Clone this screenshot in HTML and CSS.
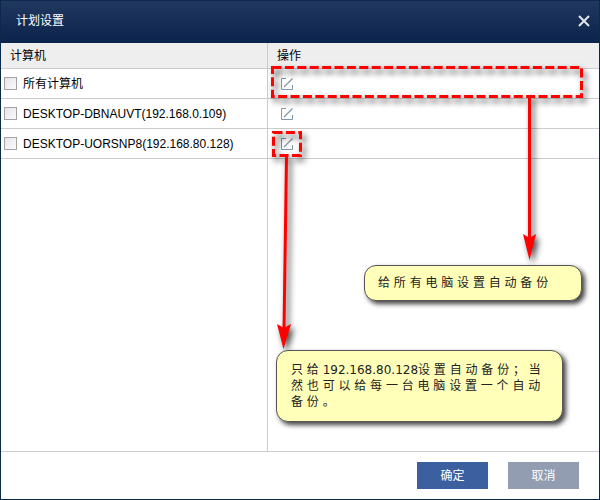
FILE: index.html
```html
<!DOCTYPE html>
<html lang="zh-CN">
<head>
<meta charset="utf-8">
<title>计划设置</title>
<link rel="stylesheet" href="styles.css">
</head>
<body>
<svg class="defs" aria-hidden="true">
  <symbol id="edit" viewBox="0 0 12 12">
    <path d="M5 .5H.5V11.5H11.5V7" fill="none" stroke="#7f97a8"/>
    <path d="M3 9L11.5 .5" fill="none" stroke="#7f97a8" stroke-width="1.2"/>
  </symbol>
</svg>
<main class="dialog">
  <header class="titlebar">
    <h1>计划设置</h1>
    <button class="close" type="button" aria-label="关闭">
      <svg viewBox="0 0 12 12" width="12" height="12"><path d="M1 1L11 11M11 1L1 11" stroke="#e2e5ea" stroke-width="2"/></svg>
    </button>
  </header>
  <div class="content">
    <table>
      <thead>
        <tr><th class="name" scope="col">计算机</th><th scope="col">操作</th></tr>
      </thead>
      <tbody>
        <tr>
          <td><label><input type="checkbox">所有计算机</label></td>
          <td><button class="edit" type="button" aria-label="编辑"><svg width="12" height="12"><use href="#edit"/></svg></button></td>
        </tr>
        <tr>
          <td><label><input type="checkbox">DESKTOP-DBNAUVT(192.168.0.109)</label></td>
          <td><button class="edit" type="button" aria-label="编辑"><svg width="12" height="12"><use href="#edit"/></svg></button></td>
        </tr>
        <tr>
          <td><label><input type="checkbox">DESKTOP-UORSNP8(192.168.80.128)</label></td>
          <td><button class="edit" type="button" aria-label="编辑"><svg width="12" height="12"><use href="#edit"/></svg></button></td>
        </tr>
        <tr class="filler"><td></td><td></td></tr>
      </tbody>
    </table>
  </div>
  <footer class="actions">
    <button class="btn primary" type="button">确定</button>
    <button class="btn secondary" type="button">取消</button>
  </footer>
  <svg class="marks" width="600" height="500" viewBox="0 0 600 500" aria-hidden="true">
    <g class="shadowed">
      <rect class="dash" x="272.5" y="67.5" width="309" height="29"/>
      <rect class="dash" x="273.5" y="132.5" width="27" height="23"/>
      <path class="line" d="M529.5 97V242M286.5 157L284 330"/>
      <path class="head" d="M529.5 260L523 234L529.5 238L536 234ZM283.5 349L277 324L284 328L291 324Z"/>
    </g>
  </svg>
  <p class="callout all">给 所 有 电 脑 设 置 自 动 备 份</p>
  <p class="callout one">只 给 192.168.80.128设 置 自 动 备 份 ； 当 然 也 可 以 给 每 一 台 电 脑 设 置 一 个 自 动 备 份 。</p>
</main>
</body>
</html>
```
FILE: styles.css
```css
* { box-sizing: border-box; }
body {
  margin: 0;
  font: 12px/16px "Liberation Sans", "Noto Sans CJK SC", sans-serif;
  color: #000;
}
button { font: inherit; border: 0; padding: 0; cursor: pointer; }
.defs { position: absolute; width: 0; height: 0; }
.dialog {
  position: relative;
  display: flex;
  flex-direction: column;
  min-height: 100vh;
  border: 1px solid #0b2948;
  background: #fff;
}
.titlebar {
  display: flex;
  align-items: center;
  justify-content: space-between;
  height: 42px;
  padding: 0 9px 2px 15px;
  background: linear-gradient(#20375f, #0b234c);
}
h1 { margin: 0; font-size: 12px; font-weight: 400; color: #fff; }
.close { display: flex; background: none; }
.content { flex: 1; display: grid; }
table {
  width: 100%;
  height: 100%;
  border-collapse: separate;
  border-spacing: 0;
  table-layout: fixed;
}
th, td { border-bottom: 1px solid #ccc; padding: 0; text-align: left; }
th:first-child, td:first-child { border-right: 1px solid #ccc; }
th { height: 26px; padding-left: 9px; background: #eee; font-weight: 400; }
th.name { width: 267px; }
td { height: 30px; }
td:last-child { padding-left: 13px; }
.filler td { height: auto; }
label { display: flex; align-items: center; padding-left: 3px; }
input {
  appearance: none;
  width: 13px;
  height: 13px;
  margin: 0 6px 0 0;
  border: 1px solid #a3a3a3;
  background: linear-gradient(135deg, #e6e6e6, #fafafa);
}
.edit { display: flex; background: none; }
.actions {
  display: flex;
  justify-content: flex-end;
  gap: 20px;
  padding: 10px 20px;
}
.btn { width: 71px; height: 27px; color: #fff; }
.primary { background: #3c609f; }
.secondary { background: #929db2; }
.marks { position: absolute; left: -1px; top: -1px; pointer-events: none; }
.shadowed { filter: drop-shadow(3px 4px 3px rgba(0, 0, 0, .75)); }
.dash { fill: none; stroke: #f00; stroke-width: 3; stroke-dasharray: 9 3.4; }
.line { fill: none; stroke: #f00; stroke-width: 3; }
.head { fill: #f00; }
.callout {
  position: absolute;
  margin: 0;
  padding: 11px 14px;
  border: 1px solid #555;
  border-radius: 12px;
  background: #ffffb9;
  box-shadow: 3px 3px 5px rgba(0, 0, 0, .75);
  font-family: "DejaVu Sans", "Noto Sans CJK SC", sans-serif;
  text-spacing-trim: space-all;
  color: #222;
}
.all { left: 363px; top: 264px; width: 218px; padding: 9px 13px; }
.one { left: 275px; top: 349px; width: 287px; }
```
